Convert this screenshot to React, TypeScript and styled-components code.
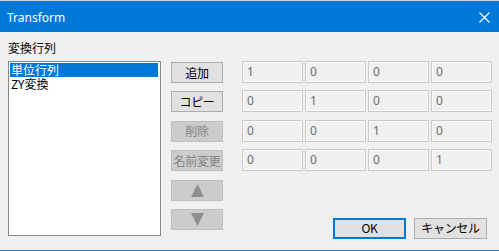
import React from 'react';
import styled, { createGlobalStyle } from 'styled-components';

const GlobalStyle = createGlobalStyle`
  html, body {
    margin: 0;
    padding: 0;
    background: #f0f0f0;
  }
  body {
    font-family: "Noto Sans CJK JP", "Noto Sans", sans-serif;
    font-size: 12px;
  }
`;

const Window = styled.div`
  width: 499px;
  height: 251px;
  display: flex;
  flex-direction: column;
  background: #f0f0f0;
  overflow: hidden;
`;

const BehindStrip = styled.div`
  height: 1px;
  background: #d8d8d8;
`;

const TitleBar = styled.div`
  height: 31px;
  background: #0078d7;
  display: flex;
  align-items: center;
  justify-content: space-between;
  padding: 0 9px 0 7px;
`;

const Title = styled.span`
  color: #ffffff;
  font-family: "Noto Sans", "Liberation Sans", sans-serif;
  font-size: 12px;
  margin-top: 2px;
`;

const CloseIcon = styled.svg`
  width: 11px;
  height: 11px;
  margin-top: 2px;
`;

const Body = styled.div`
  flex: 1;
  display: flex;
  padding: 0 12px 0 8px;
`;

const LeftColumn = styled.div`
  display: flex;
  flex-direction: column;
  padding-top: 6px;
`;

const Label = styled.div`
  height: 20px;
  line-height: 20px;
  margin-bottom: 3px;
  color: #000;
`;

const ListBox = styled.div`
  width: 153px;
  height: 175px;
  box-sizing: border-box;
  border: 1px solid #828790;
  background: #ffffff;
  padding: 1px;
`;

const ListItem = styled.div<{ $selected?: boolean }>`
  height: 14px;
  line-height: 14px;
  padding-left: 1px;
  margin-right: 1px;
  white-space: nowrap;
  color: ${p => (p.$selected ? '#ffffff' : '#000000')};
  background: ${p => (p.$selected ? '#0078d7' : 'transparent')};
`;

const ButtonColumn = styled.div`
  display: flex;
  flex-direction: column;
  gap: 8.4px;
  padding-top: 30px;
  margin-left: 10px;
`;

const Button = styled.button<{ $width?: number; $default?: boolean }>`
  width: ${p => p.$width ?? 52}px;
  height: 21px;
  box-sizing: border-box;
  padding: 0;
  margin: 0;
  font-family: "Noto Sans CJK JP", "Noto Sans", sans-serif;
  font-size: 12px;
  line-height: 1;
  color: #000000;
  background: #e1e1e1;
  border: ${p => (p.$default ? '2px solid #0078d7' : '1px solid #adadad')};
  display: flex;
  align-items: center;
  justify-content: center;
  white-space: nowrap;
  letter-spacing: -0.3px;

  &:disabled {
    color: #838383;
    background: #cccccc;
    border-color: #bfbfbf;
  }
`;

const Arrow = styled.svg`
  width: 13px;
  height: 13px;
`;

const RightColumn = styled.div`
  display: flex;
  flex-direction: column;
  padding-top: 29px;
  margin-left: 19px;
`;

const MatrixGrid = styled.div`
  display: grid;
  grid-template-columns: repeat(4, 61px);
  grid-auto-rows: 22px;
  column-gap: 2px;
  row-gap: 7.33px;
`;

const Cell = styled.div`
  box-sizing: border-box;
  border: 1px solid #cacaca;
  box-shadow: inset 0 0 0 1px #fafafa;
  background: #f0f0f0;
  color: #6d6d6d;
  font-family: "Noto Sans", "Liberation Sans", sans-serif;
  font-size: 12px;
  line-height: 20px;
  padding-left: 4px;
`;

const Footer = styled.div`
  display: flex;
  justify-content: flex-end;
  gap: 8px;
  margin-top: 47px;
  padding-right: 5px;
`;

const BottomEdge = styled.div`
  height: 1px;
  background: #1883d7;
`;

const matrix = [
  [1, 0, 0, 0],
  [0, 1, 0, 0],
  [0, 0, 1, 0],
  [0, 0, 0, 1],
];

const App: React.FC = () => {
  return (
    <Window>
      <GlobalStyle />
      <BehindStrip />
      <TitleBar>
        <Title>Transform</Title>
        <CloseIcon viewBox="0 0 11 11">
          <path d="M0.5 0.5 L10.5 10.5 M10.5 0.5 L0.5 10.5" stroke="#ffffff" strokeWidth="1.1" />
        </CloseIcon>
      </TitleBar>

      <Body>
        <LeftColumn>
          <Label>変換行列</Label>
          <ListBox>
            <ListItem $selected>単位行列</ListItem>
            <ListItem>ZY変換</ListItem>
          </ListBox>
        </LeftColumn>

        <ButtonColumn>
          <Button>追加</Button>
          <Button>コピー</Button>
          <Button disabled>削除</Button>
          <Button disabled>名前変更</Button>
          <Button disabled>
            <Arrow viewBox="0 0 13 13">
              <polygon points="6.5,0 13,13 0,13" fill="#8f8f8f" />
            </Arrow>
          </Button>
          <Button disabled>
            <Arrow viewBox="0 0 13 13">
              <polygon points="0,0 13,0 6.5,13" fill="#8f8f8f" />
            </Arrow>
          </Button>
        </ButtonColumn>

        <RightColumn>
          <MatrixGrid>
            {matrix.flat().map((v, i) => (
              <Cell key={i}>{v}</Cell>
            ))}
          </MatrixGrid>
          <Footer>
            <Button $width={73} $default>OK</Button>
            <Button $width={73}>キャンセル</Button>
          </Footer>
        </RightColumn>
      </Body>
      <BottomEdge />
    </Window>
  );
};

export default App;
